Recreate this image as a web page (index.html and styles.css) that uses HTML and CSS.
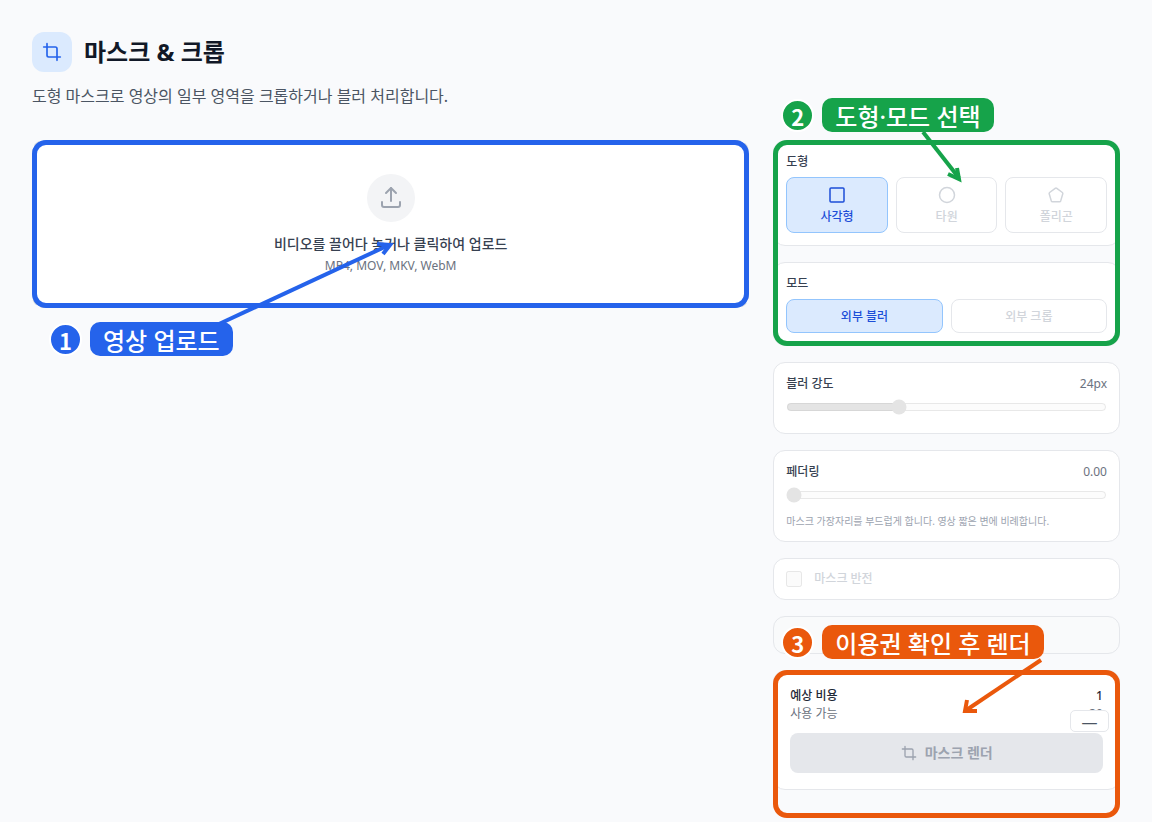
FILE: index.html
```html
<!DOCTYPE html>
<html lang="ko">
<head>
<meta charset="utf-8">
<meta name="viewport" content="width=device-width, initial-scale=1">
<title>마스크 &amp; 크롭</title>
<link rel="stylesheet" href="styles.css">
</head>
<body>
<main class="page">
  <header class="header">
    <div class="title-row">
      <span class="title-icon">
        <svg class="icon" width="20" height="20" viewBox="0 0 24 24"><path d="M6 2v14a2 2 0 0 0 2 2h14"/><path d="M18 22V8a2 2 0 0 0-2-2H2"/></svg>
      </span>
      <h1 class="title">마스크 &amp; 크롭</h1>
    </div>
    <p class="subtitle">도형 마스크로 영상의 일부 영역을 크롭하거나 블러 처리합니다.</p>
  </header>

  <div class="layout">
    <section class="step step-upload">
      <button type="button" class="dropzone">
        <span class="drop-icon">
          <svg class="icon" width="24" height="24" viewBox="0 0 24 24"><path d="M3 16v3a2 2 0 0 0 2 2h14a2 2 0 0 0 2-2v-3"/><path d="M7 7l5-5 5 5"/><path d="M12 2v13"/></svg>
        </span>
        <span class="drop-title">비디오를 끌어다 놓거나 클릭하여 업로드</span>
        <span class="drop-hint">MP4, MOV, MKV, WebM</span>
      </button>
      <div class="frame"></div>
      <svg class="arrow arrow-upload" width="180" height="90" viewBox="0 0 180 90"><path d="M4 86L174 7"/><path d="M162 6L175 7L168 16"/></svg>
      <div class="callout"><span class="number">1</span><span class="callout-text">영상 업로드</span></div>
    </section>

    <aside class="side">
      <div class="step step-options">
        <section class="card">
          <h2 class="label">도형</h2>
          <div class="shapes">
            <button type="button" class="option shape selected">
              <svg class="icon" width="20" height="20" viewBox="0 0 20 20"><rect x="3" y="3" width="14" height="14" rx="1"/></svg>
              사각형
            </button>
            <button type="button" class="option shape" disabled>
              <svg class="icon" width="20" height="20" viewBox="0 0 20 20"><circle cx="10" cy="10" r="7.5"/></svg>
              타원
            </button>
            <button type="button" class="option shape" disabled>
              <svg class="icon" width="20" height="20" viewBox="0 0 20 20"><path d="M9.2 3.3a1.3 1.3 0 0 1 1.6 0l5.6 4.2a1.1 1.1 0 0 1 .4 1.2l-2.1 7.2a1.3 1.3 0 0 1-1.2.9H6.5a1.3 1.3 0 0 1-1.2-.9L3.2 8.7a1.1 1.1 0 0 1 .4-1.2Z"/></svg>
              폴리곤
            </button>
          </div>
        </section>
        <section class="card">
          <h2 class="label">모드</h2>
          <div class="modes">
            <button type="button" class="option selected">외부 블러</button>
            <button type="button" class="option" disabled>외부 크롭</button>
          </div>
        </section>
        <div class="frame"></div>
        <svg class="arrow arrow-options" width="50" height="60" viewBox="0 0 50 60"><path d="M6 4L42 50"/><path d="M40 40L42 51L31 46"/></svg>
        <div class="callout"><span class="number">2</span><span class="callout-text">도형·모드 선택</span></div>
      </div>

      <section class="card">
        <div class="field-row"><label class="label" for="blur">블러 강도</label><output class="value" for="blur">24px</output></div>
        <div class="slider"><input id="blur" type="range" min="1" max="68" value="24" disabled></div>
      </section>

      <section class="card">
        <div class="field-row"><label class="label" for="feather">페더링</label><output class="value" for="feather">0.00</output></div>
        <div class="slider"><input id="feather" type="range" min="0" max="1" step="0.01" value="0" disabled></div>
        <p class="hint">마스크 가장자리를 부드럽게 합니다. 영상 짧은 변에 비례합니다.</p>
      </section>

      <section class="card">
        <label class="check"><input type="checkbox" disabled>마스크 반전</label>
      </section>

      <div class="card card-empty"></div>

      <div class="step step-render">
        <section class="card card-render">
          <div class="cost"><span>예상 비용</span><span>1</span></div>
          <div class="cost available"><span>사용 가능</span><span>30</span></div>
          <button type="button" class="render" disabled>
            <svg class="icon" width="16" height="16" viewBox="0 0 24 24"><path d="M6 2v14a2 2 0 0 0 2 2h14"/><path d="M18 22V8a2 2 0 0 0-2-2H2"/></svg>
            마스크 렌더
          </button>
        </section>
        <div class="chip">—</div>
        <div class="frame"></div>
        <svg class="arrow arrow-render" width="90" height="60" viewBox="0 0 90 60"><path d="M82 4L6 55"/><path d="M8 44L6 55L18 55"/></svg>
        <div class="callout"><span class="number">3</span><span class="callout-text">이용권 확인 후 렌더</span></div>
      </div>
    </aside>
  </div>
</main>
</body>
</html>
```
FILE: styles.css
```css
* { box-sizing: border-box; }

body {
  margin: 0;
  min-height: 100vh;
  background: #f9fafc;
  color: #111827;
  font-family: "Noto Sans", "Noto Sans CJK KR", sans-serif;
  font-size: 12px;
  line-height: 16px;
}

h1, h2, p { margin: 0; }
button { font: inherit; }

.icon {
  display: block;
  fill: none;
  stroke: currentColor;
  stroke-width: 2;
  stroke-linecap: round;
  stroke-linejoin: round;
}

.page { padding: 32px; }
.header { margin-bottom: 32px; }
.title-row { display: flex; align-items: center; gap: 12px; }
.title-icon {
  display: grid;
  place-items: center;
  width: 40px;
  height: 40px;
  border-radius: 12px;
  background: #dbeafe;
  color: #2563eb;
}
.title { font-size: 24px; line-height: 32px; font-weight: 700; }
.subtitle { margin-top: 12px; font-size: 16px; line-height: 24px; color: #4b5563; }

.layout {
  display: grid;
  grid-template-columns: repeat(3, minmax(0, 1fr));
  gap: 24px;
  align-items: start;
}
.step { position: relative; }
.step-upload { grid-column: span 2; --mark: #2563eb; }
.step-options { display: grid; gap: 16px; --mark: #16a34a; }
.step-render { --mark: #ea580c; }

.dropzone {
  display: flex;
  flex-direction: column;
  align-items: center;
  width: 100%;
  padding: 32px;
  border: 2px dashed #d1d5db;
  border-radius: 12px;
  background: #fff;
}
.drop-icon {
  display: grid;
  place-items: center;
  width: 48px;
  height: 48px;
  margin-bottom: 12px;
  border-radius: 50%;
  background: #f3f4f6;
  color: #9ca3af;
}
.drop-title { margin-bottom: 4px; font-size: 14px; line-height: 20px; font-weight: 500; color: #374151; }
.drop-hint { color: #6b7280; }

.side { display: grid; gap: 16px; }
.card {
  padding: 12px;
  border: 1px solid #e5e7eb;
  border-radius: 12px;
  background: #fff;
}
.card-empty { height: 38px; background: #f9fafb; }
.label { font-size: 12px; line-height: 18px; font-weight: 500; color: #374151; }
.field-row { display: flex; justify-content: space-between; line-height: 18px; }
.value { color: #6b7280; }

.shapes, .modes { display: grid; gap: 8px; margin-top: 6px; }
.shapes { grid-template-columns: repeat(3, 1fr); }
.modes { grid-template-columns: repeat(2, 1fr); }
.option {
  padding: 9px 8px 7px;
  border: 1px solid #e5e7eb;
  border-radius: 8px;
  background: #fff;
  color: #d1d5db;
  font-weight: 500;
}
.option .icon { stroke-width: 1.5; }
.shape { display: flex; flex-direction: column; align-items: center; gap: 4px; padding: 7px 8px; }
.option.selected { border-color: #93c5fd; background: #dbeafe; color: #1d4ed8; }

.slider { height: 22px; margin-top: 6px; }
.slider input { display: block; width: 100%; height: 16px; margin: 0; opacity: 0.5; }
.hint { margin-top: 4px; font-size: 10px; color: #9ca3af; }
.check { display: flex; align-items: center; gap: 12px; color: #d1d5db; font-weight: 500; }
.check input { width: 16px; height: 16px; margin: 0; opacity: 0.5; }

.card-render { padding: 16px; }
.cost { display: flex; justify-content: space-between; line-height: 18px; font-weight: 500; color: #1f2937; }
.cost.available { margin-bottom: 10px; font-weight: 400; color: #6b7280; }
.render {
  display: flex;
  align-items: center;
  justify-content: center;
  gap: 8px;
  width: 100%;
  height: 40px;
  border: 0;
  border-radius: 8px;
  background: #e5e7eb;
  color: #9ca3af;
  font-size: 14px;
  line-height: 20px;
  font-weight: 600;
}
.chip {
  position: absolute;
  right: 11px;
  top: 40px;
  width: 39px;
  height: 22px;
  border: 1px solid #e5e7eb;
  border-radius: 5px;
  background: #fff;
  color: #4b5563;
  font-size: 16px;
  line-height: 22px;
  text-align: center;
}

/* Guide marks lie over the cards */
.frame {
  position: absolute;
  inset: 0;
  border: 5px solid var(--mark);
  border-radius: 14px;
  pointer-events: none;
}
.step-render .frame { bottom: -28px; }

.callout { position: absolute; display: flex; align-items: center; gap: 8px; white-space: nowrap; }
.step-upload .callout { left: 17px; top: 182px; }
.step-options .callout { left: 8px; top: -42px; }
.step-render .callout { left: 8px; top: -45px; }
.number {
  width: 33px;
  height: 33px;
  border: 2px solid #fff;
  border-radius: 50%;
  background: var(--mark);
  color: #fff;
  font-family: "Noto Sans CJK KR", sans-serif;
  font-size: 22px;
  line-height: 31px;
  font-weight: 700;
  text-align: center;
}
.callout-text {
  height: 34px;
  padding: 0 13px;
  border-radius: 10px;
  background: var(--mark);
  color: #fff;
  font-size: 24px;
  line-height: 38px;
  font-weight: 500;
}

.arrow { position: absolute; fill: none; stroke: var(--mark); stroke-width: 4; }
.arrow-upload { left: 183px; top: 98px; }
.arrow-options { left: 144px; top: -12px; }
.arrow-render { left: 186px; top: -14px; }
```
